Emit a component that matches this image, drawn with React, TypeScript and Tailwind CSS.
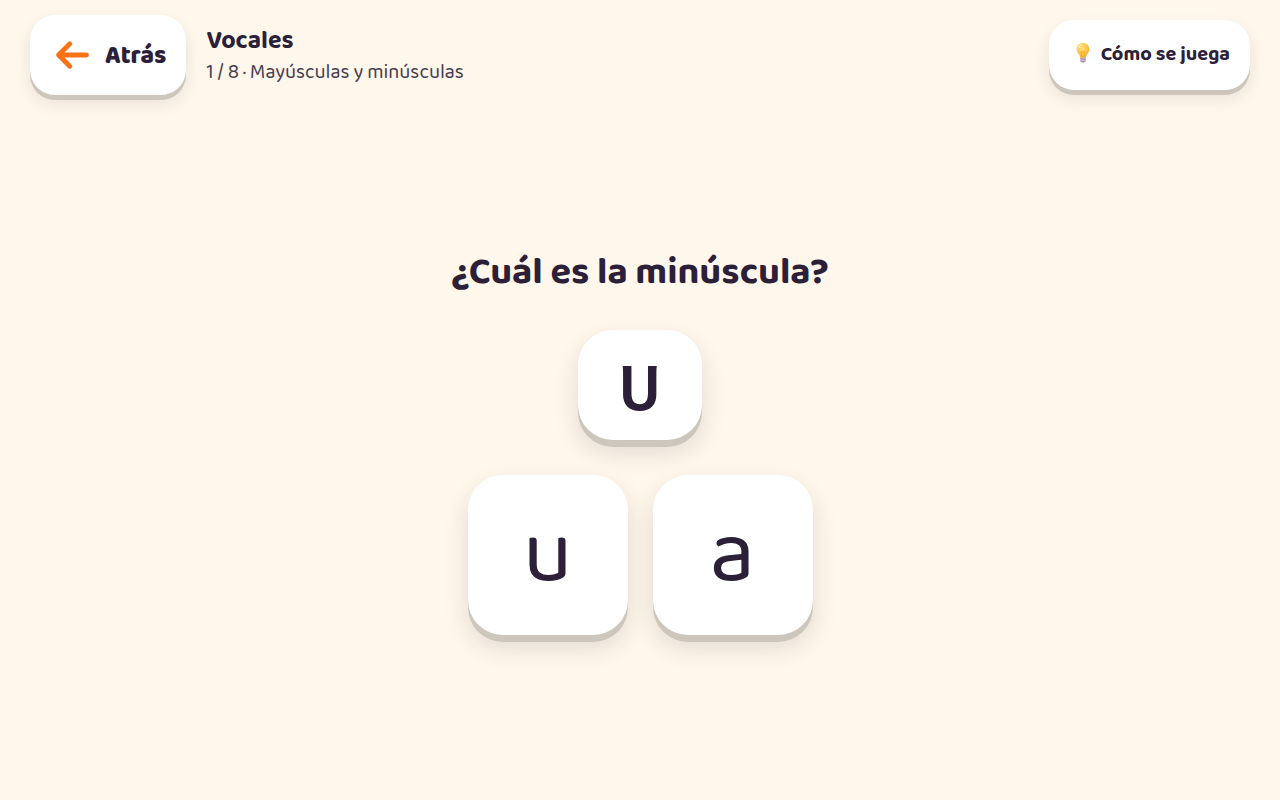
import { useState } from 'react';
import type { ReactNode } from 'react';

const TOTAL_ROUNDS = 8;

const question = {
  prompt: '¿Cuál es la minúscula?',
  letter: 'U',
  options: ['u', 'a'],
};

export default function App() {
  const [picked, setPicked] = useState<string | null>(null);

  return (
    <div className="min-h-screen flex flex-col bg-[#fff7eb] text-[#2b2038] font-['Baloo_2','Noto_Sans',sans-serif]">
      {/* Header */}
      <header className="flex items-center gap-5 px-[30px] py-[15px]">
        <HeaderButton className="h-20 gap-[15px] pl-6 pr-5 text-[25px] leading-8 font-extrabold">
          <ArrowIcon />
          <span className="pt-0.5">Atrás</span>
        </HeaderButton>
        <div className="flex-1 min-w-0 pt-0.5">
          <h1 className="text-[25px] leading-8 font-bold">Vocales</h1>
          <p className="text-xl leading-[30px] text-[#463c50]">1 / {TOTAL_ROUNDS} · Mayúsculas y minúsculas</p>
        </div>
        <HeaderButton className="h-[70px] gap-2 pb-1 pl-6 pr-5 text-xl leading-7 font-bold">
          <BulbIcon />
          <span className="pt-0.5">Cómo se juega</span>
        </HeaderButton>
      </header>

      {/* Question */}
      <main className="flex-1 flex flex-col items-center justify-center gap-[35px] px-6 pb-6">
        <h2 className="text-[38px] leading-11 font-bold text-center">{question.prompt}</h2>
        <div className="w-[124px] h-[110px] flex items-center justify-center rounded-[35px] bg-white font-['Andika','Open_Sans',sans-serif] text-6xl font-bold shadow-[0_7px_0_#ccc6bc,0_12px_24px_rgba(43,32,56,0.14)]">
          {question.letter}
        </div>
        <div className="flex flex-wrap justify-center gap-[25px]">
          {question.options.map(option => (
            <button
              key={option}
              type="button"
              aria-pressed={picked === option}
              onClick={() => setPicked(option)}
              className="size-40 flex items-center justify-center rounded-[35px] bg-white text-[90px] leading-none cursor-pointer shadow-[0_7px_0_#ccc6bc,0_12px_24px_rgba(43,32,56,0.14)]"
            >
              {option}
            </button>
          ))}
        </div>
      </main>
    </div>
  );
}

function HeaderButton({ className, children }: { className: string; children: ReactNode }) {
  return (
    <button
      type="button"
      className={`shrink-0 flex items-center rounded-[25px] bg-white cursor-pointer shadow-[0_5px_0_#ccc6bc,0_8px_16px_rgba(43,32,56,0.1)] ${className}`}
    >
      {children}
    </button>
  );
}

function ArrowIcon() {
  return (
    <svg
      className="w-9 h-9 shrink-0"
      viewBox="0 0 36 36"
      fill="none"
      stroke="#f97316"
      strokeWidth="4.8"
      strokeLinecap="round"
      strokeLinejoin="round"
      aria-hidden="true"
    >
      <path d="M32.5 18H4.6M15.8 6.8L4.6 18L15.8 29.2" />
    </svg>
  );
}

function BulbIcon() {
  return (
    <svg className="w-5 h-5 shrink-0" viewBox="0 0 20 20" aria-hidden="true">
      <defs>
        <radialGradient id="bulb-glass" cx="0.4" cy="0.3" r="0.75">
          <stop offset="0" stopColor="#ffe082" />
          <stop offset="0.6" stopColor="#fcc440" />
          <stop offset="1" stopColor="#f5a623" />
        </radialGradient>
      </defs>
      <path d="M10 0C6.3 0 3.7 2.7 3.7 6.1c0 2.8 1.6 4.3 2.6 6 .5.9.6 2.1 1.2 2.7h5c.6-.6.7-1.8 1.2-2.7 1-1.7 2.6-3.2 2.6-6C16.3 2.7 13.7 0 10 0z" fill="url(#bulb-glass)" />
      <path d="M8.8 14L7.9 8.6c.8.7 1.5.6 2.1-.2.6.8 1.3.9 2.1.2L11.2 14" fill="none" stroke="#eda02d" strokeWidth="0.7" />
      <path d="M5.8 4.8C6.2 3.2 7.2 2.2 8.7 1.9" fill="none" stroke="#fff5c4" strokeWidth="1.1" strokeLinecap="round" />
      <path d="M7.3 14.7h5.4v3.2c0 .7-.9 1-1.4 1.4-.7.6-1.9.6-2.6 0-.5-.4-1.4-.7-1.4-1.4z" fill="#a78fac" />
      <path d="M7.3 16.2l5.4-.6M7.3 17.9l5.4-.6" stroke="#d9c9dc" strokeWidth="0.7" />
    </svg>
  );
}
